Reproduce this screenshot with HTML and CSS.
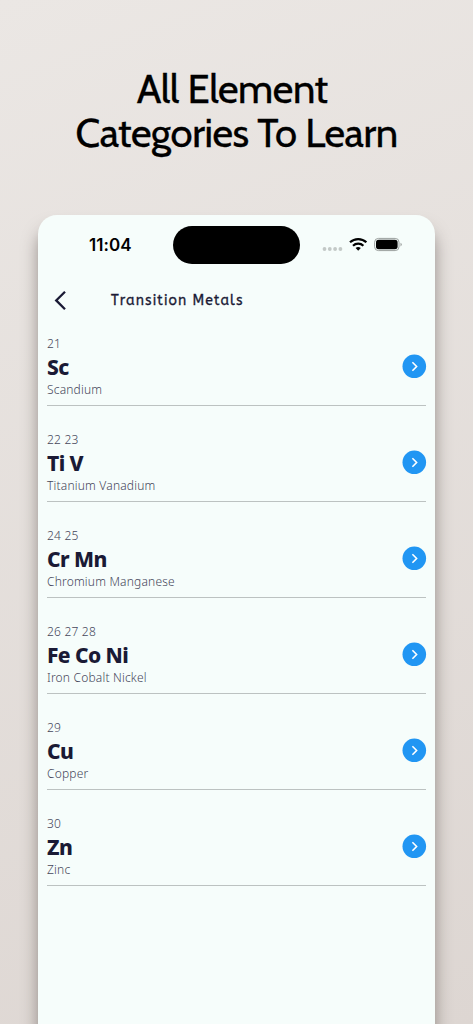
FILE: index.html
```html
<!DOCTYPE html>
<html lang="en">
<head>
<meta charset="utf-8">
<title>Transition Metals</title>
<link rel="stylesheet" href="styles.css">
</head>
<body>
<h1 class="headline">All Element&nbsp;<br>Categories To Learn</h1>
<main class="phone">
  <div class="status">
    <span class="time">11:04</span>
    <span class="island"></span>
    <svg class="sys" viewBox="0 0 82 16" width="82" height="16"><g fill="#c3c9c7"><circle cx="3.5" cy="12" r="1.9"/><circle cx="8.8" cy="12" r="1.9"/><circle cx="14.1" cy="12" r="1.9"/><circle cx="19.4" cy="12" r="1.9"/></g><g fill="none" stroke="#000" stroke-width="2.2"><path d="M29 5.3a12 12 0 0 1 16.4 0M32 8.7a7.5 7.5 0 0 1 10.4 0"/></g><path d="M34.6 11a4 4 0 0 1 5.2 0L37.2 13.7z"/><rect x="53.6" y="1.4" width="24.4" height="12.2" rx="3.8" fill="none" stroke="#9ba09e"/><rect x="55" y="2.8" width="21.6" height="9.4" rx="2.6"/><path d="M79.5 5.8q2.6 1.7 0 3.6z" fill="#9ba09e"/></svg>
  </div>
  <header class="bar">
    <svg width="14" height="22" viewBox="0 0 14 22"><path d="M13 2.7 4.2 11.4l8.8 8.8" fill="none" stroke="#1a1a35" stroke-width="2.3"/></svg>
    <h2>Transition Metals</h2>
  </header>
  <ul class="list">
    <li><div><p class="num">21</p><p class="sym">Sc</p><p class="name">Scandium</p></div><svg class="go" viewBox="0 0 24 24"><circle cx="12.3" cy="12.3" r="11.8"/><path d="m10.4 8.3 4.2 4.2-4.2 4.2"/></svg></li>
    <li><div><p class="num">22 23</p><p class="sym">Ti V</p><p class="name">Titanium Vanadium</p></div><svg class="go" viewBox="0 0 24 24"><circle cx="12.3" cy="12.3" r="11.8"/><path d="m10.4 8.3 4.2 4.2-4.2 4.2"/></svg></li>
    <li><div><p class="num">24 25</p><p class="sym">Cr Mn</p><p class="name">Chromium Manganese</p></div><svg class="go" viewBox="0 0 24 24"><circle cx="12.3" cy="12.3" r="11.8"/><path d="m10.4 8.3 4.2 4.2-4.2 4.2"/></svg></li>
    <li><div><p class="num">26 27 28</p><p class="sym">Fe Co Ni</p><p class="name">Iron Cobalt Nickel</p></div><svg class="go" viewBox="0 0 24 24"><circle cx="12.3" cy="12.3" r="11.8"/><path d="m10.4 8.3 4.2 4.2-4.2 4.2"/></svg></li>
    <li><div><p class="num">29</p><p class="sym">Cu</p><p class="name">Copper</p></div><svg class="go" viewBox="0 0 24 24"><circle cx="12.3" cy="12.3" r="11.8"/><path d="m10.4 8.3 4.2 4.2-4.2 4.2"/></svg></li>
    <li><div><p class="num">30</p><p class="sym">Zn</p><p class="name">Zinc</p></div><svg class="go" viewBox="0 0 24 24"><circle cx="12.3" cy="12.3" r="11.8"/><path d="m10.4 8.3 4.2 4.2-4.2 4.2"/></svg></li>
  </ul>
</main>
</body>
</html>
```
FILE: styles.css
```css
* { box-sizing: border-box; margin: 0; padding: 0; }
body { height: 1024px; overflow: hidden; background: linear-gradient(160deg, #ebe7e4, #ddd6d2); font-family: "Noto Sans", sans-serif; color: #1a1a35; }
.headline { height: 215px; padding-top: 67px; text-align: center; font: 400 40px/43.5px Cabin, Lato, sans-serif; letter-spacing: -.4px; color: #000; -webkit-text-stroke: .3px #000; }
.phone { width: 397px; height: 830px; margin-left: 38px; border-radius: 19px 19px 0 0; background: #f6fdfb; box-shadow: 0 14px 16px rgba(70, 60, 55, .5); }
.status { height: 60px; padding: 11px 31px 0 51px; display: flex; align-items: flex-start; }
.time { width: 84px; padding-top: 8px; font: 600 17px/22px Inter, sans-serif; letter-spacing: .05px; color: #000; }
.island { width: 127px; height: 38px; border-radius: 19px; background: #000; }
.sys { margin: 11px 0 0 21px; }
.bar { height: 50px; display: flex; align-items: center; padding-left: 14px; gap: 45px; }
.bar h2 { padding-top: 2px; font: 500 14px/20px ABeeZee, Andika, "Noto Sans", sans-serif; letter-spacing: 1.08px; -webkit-text-stroke: .3px #1a1a35; }
.list { list-style: none; padding: 0 9px; }
.list li { height: 96px; padding-top: 24px; display: flex; justify-content: space-between; border-bottom: 1px solid #bcc2c1; }
.list li:first-child { height: 81px; padding-top: 9px; }
.num, .name { font-size: 12px; line-height: 19px; font-weight: 300; color: #45465a; }
.num { letter-spacing: .2px; }
.name { letter-spacing: .19px; }
.sym { padding-top: 1px; font-size: 21px; line-height: 26px; font-weight: 800; letter-spacing: -.55px; }
.go { width: 24px; height: 24px; margin-top: 20px; fill: #2196f3; overflow: visible; }
.go path { fill: none; stroke: #fff; stroke-width: 1.6; }
```
